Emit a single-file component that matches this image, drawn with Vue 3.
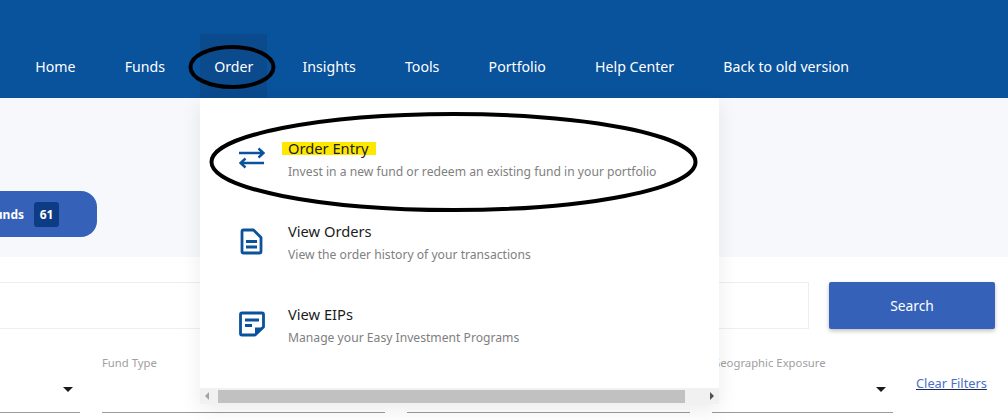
<template>
  <div class="page">
    <header class="topbar">
      <nav class="nav">
        <div v-for="item in navItems" :key="item" class="nav-item" :class="{ active: item === 'Order' }">
          {{ item }}
        </div>
      </nav>
      <div class="menu">
        <div v-for="entry in entries" :key="entry.title" class="menu-row">
          <div class="menu-icon">
            <svg v-if="entry.icon === 'swap'" width="26" height="26" viewBox="0 0 26 26" fill="none" stroke="#0a529b" stroke-width="2.4">
              <path d="M0 8h24M19.500 3.500 24.500 8l-5 4.500" />
              <path d="M25 18H2M6.500 13.500 1.500 18l5 4.500" />
            </svg>
            <svg v-else-if="entry.icon === 'doc'" width="26" height="28" viewBox="0 0 26 28" fill="none" stroke="#0a529b" stroke-width="2.800">
              <path d="M4.500 2h10l7.500 7.500v14q0 1.500-1.500 1.500h-16q-1.500 0-1.500-1.500v-20q0-1.500 1.500-1.500z" stroke-linejoin="round" />
              <path d="M7 13.500h11M7 19h11" />
            </svg>
            <svg v-else width="26" height="26" viewBox="0 0 26 26" fill="none" stroke="#0a529b" stroke-width="2.800">
              <path d="M3 2h20q1.500 0 1.500 1.500V16L16 24H3q-1.500 0-1.500-1.500v-19Q1.500 2 3 2z" stroke-linejoin="round" />
              <path d="M6 9h14M6 14.500h7" />
              <path d="M16 16.500h8v1l-7 7h-1z" fill="#0a529b" stroke="none" />
            </svg>
          </div>
          <div>
            <div class="menu-title"><span :class="{ marked: entry.marked }">{{ entry.title }}</span></div>
            <div class="menu-sub">{{ entry.sub }}</div>
          </div>
        </div>
        <div class="scrollbar">
          <span class="arrow-left"></span>
          <span class="thumb"></span>
          <span class="arrow-right"></span>
        </div>
      </div>
    </header>

    <section class="hero">
      <div class="pill">
        <span class="pill-text">All Funds</span>
        <span class="badge">61</span>
      </div>
    </section>

    <section class="search-row">
      <div class="search-input"></div>
      <button class="search-btn" type="button">Search</button>
    </section>

    <section class="filters">
      <div v-for="f in filters" :key="f.label" class="filter" :style="{ width: f.width + 'px' }">
        <div class="filter-label">{{ f.label }}</div>
        <span class="caret"></span>
      </div>
      <a class="clear" href="#">Clear Filters</a>
    </section>

    <!-- hand drawn marks on top of the screenshot -->
    <svg class="marks" width="1008" height="420" viewBox="0 0 1008 420" fill="none" stroke="#000" stroke-width="4">
      <ellipse cx="232" cy="67" rx="41.500" ry="20" />
      <ellipse cx="453.500" cy="162" rx="242" ry="48" />
    </svg>
  </div>
</template>

<script setup>
const navItems = ['Home', 'Funds', 'Order', 'Insights', 'Tools', 'Portfolio', 'Help Center', 'Back to old version']

const entries = [
  { icon: 'swap', title: 'Order Entry', sub: 'Invest in a new fund or redeem an existing fund in your portfolio', marked: true },
  { icon: 'doc', title: 'View Orders', sub: 'View the order history of your transactions' },
  { icon: 'note', title: 'View EIPs', sub: 'Manage your Easy Investment Programs' }
]

const filters = [
  { label: '', width: 80 },
  { label: 'Fund Type', width: 283 },
  { label: 'Risk Level', width: 283 },
  { label: 'Geographic Exposure', width: 181 }
]
</script>

<style>
html, body {
  margin: 0;
  overflow: hidden;
}
</style>

<style scoped>
.page {
  position: relative;
  width: 1008px;
  height: 420px;
  overflow: hidden;
  background: #fff;
  font-family: "Noto Sans", "Open Sans", sans-serif;
}

.topbar {
  position: relative;
  height: 98px;
  background: #09529c;
  display: flex;
  align-items: flex-end;
}

.nav {
  display: flex;
  gap: 21.200px;
  padding-left: 21.300px;
}

.nav-item {
  height: 64px;
  line-height: 66px;
  padding: 0 14px;
  color: #fff;
  font-size: 14.150px;
  white-space: nowrap;
}

.nav-item.active {
  background: #0a4a8d;
}

.menu {
  position: absolute;
  left: 200px;
  top: 98px;
  width: 519px;
  height: 306px;
  box-sizing: border-box;
  padding-top: 41px;
  background: #fff;
  box-shadow: 0 6px 20px rgba(0, 0, 0, 0.08);
  display: flex;
  flex-direction: column;
  gap: 41px;
  z-index: 2;
}

.menu-row {
  display: flex;
  height: 42px;
  padding-left: 39px;
  gap: 23px;
}

.menu-icon {
  width: 26px;
  padding-top: 6px;
}

.menu-title {
  margin-top: -1px;
  font-size: 14.700px;
  line-height: 20px;
  color: #1c1c1c;
}

.marked {
  display: inline-block;
  height: 13px;
  line-height: 13px;
  margin: 3px 0 0 -6px;
  padding: 0 7px 0 6px;
  background: #ffe800;
}

.menu-sub {
  margin-top: 3.500px;
  font-size: 12.150px;
  line-height: 20px;
  color: #808080;
  white-space: nowrap;
}

.scrollbar {
  margin-top: auto;
  height: 17px;
  background: #f1f1f1;
  display: flex;
  align-items: center;
  padding: 0 5px;
}

.thumb {
  width: 467px;
  height: 13px;
  margin: 0 auto 0 9px;
  background: #c1c1c1;
}

.arrow-left {
  border: 4px solid transparent;
  border-left: 0;
  border-right: 4px solid #a3a3a3;
}

.arrow-right {
  border: 4px solid transparent;
  border-right: 0;
  border-left: 4px solid #505050;
}

.hero {
  height: 159px;
  background: #f7f8fc;
  box-sizing: border-box;
  padding-top: 93px;
}

.pill {
  display: flex;
  align-items: center;
  justify-content: flex-end;
  gap: 10px;
  width: 127px;
  height: 46px;
  margin-left: -30px;
  padding-right: 38px;
  box-sizing: border-box;
  background: #3562b8;
  border-radius: 0 16px 16px 0;
  color: #fff;
  font-size: 12px;
  font-weight: 700;
}

.pill-text {
  white-space: nowrap;
}

.badge {
  width: 25px;
  height: 25px;
  line-height: 25px;
  flex: none;
  text-align: center;
  background: #0e3c84;
  border-radius: 3px;
}

.search-row {
  display: flex;
  gap: 20px;
  padding-top: 25px;
}

.search-input {
  width: 819px;
  height: 47px;
  margin-left: -10px;
  box-sizing: border-box;
  border: 1px solid #eeeeee;
}

.search-btn {
  width: 166px;
  height: 47px;
  border: 0;
  border-radius: 2px;
  background: #3562b8;
  color: #fff;
  font-family: inherit;
  font-size: 13.800px;
  font-weight: 400;
  box-shadow: 0 2px 4px rgba(0, 0, 0, 0.25);
}

.filters {
  display: flex;
  gap: 22px;
  padding-top: 26px;
}

.filter {
  position: relative;
  height: 57px;
  border-bottom: 1px solid #9a9a9a;
  flex: none;
}

.filter-label {
  height: 16px;
  font-size: 11.300px;
  line-height: 16px;
  color: #a0a0a0;
}

.caret {
  position: absolute;
  right: 7px;
  top: 32px;
  border: 5px solid transparent;
  border-top: 5px solid #1a1a1a;
  border-bottom: 0;
}

.clear {
  margin: 18px 0 0 1px;
  height: 20px;
  font-size: 12.800px;
  line-height: 20px;
  color: #4a6fc8;
  text-decoration: underline;
  text-decoration-color: #1a2a5a;
  white-space: nowrap;
}

.marks {
  position: absolute;
  left: 0;
  top: 0;
  z-index: 3;
  pointer-events: none;
}
</style>
